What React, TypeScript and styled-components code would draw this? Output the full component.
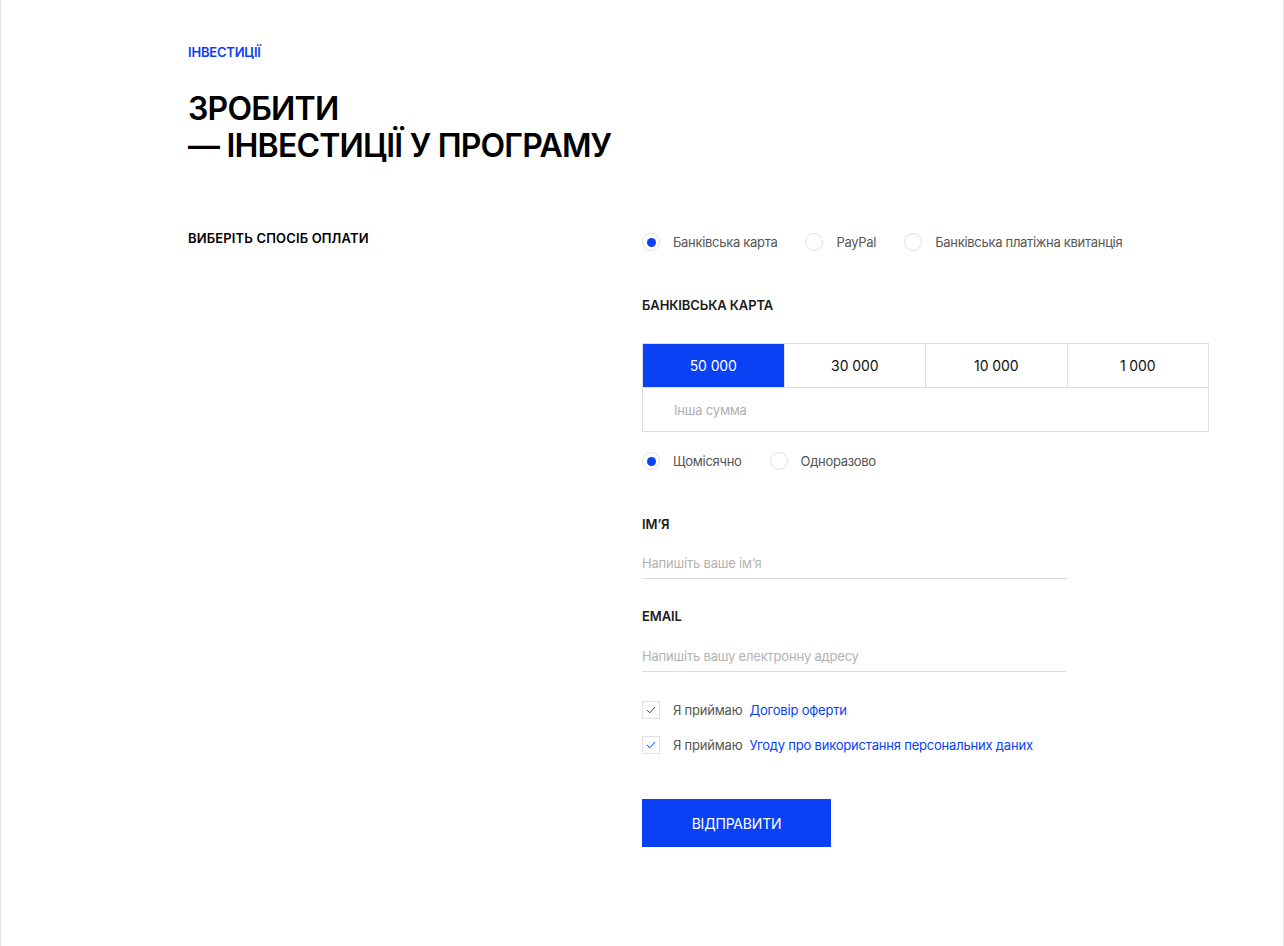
import React, { useState } from "react";
import styled, { createGlobalStyle } from "styled-components";

const BLUE = "#0a41f5";

const GlobalStyle = createGlobalStyle`
  body {
    margin: 0;
    background: #fff;
    font-family: Inter, "Noto Sans", "Liberation Sans", sans-serif;
    color: #111;
  }
  * { box-sizing: border-box; }
`;

const Page = styled.div`
  width: 1284px;
  min-height: 946px;
  border-left: 1px solid #e6e6e6;
  border-right: 1px solid #e6e6e6;
  padding: 44px 0 0 187px;
`;

const Eyebrow = styled.div`
  font-size: 13px;
  line-height: 16px;
  font-weight: 600;
  color: ${BLUE};
  letter-spacing: -0.2px;
`;

const Title = styled.h1`
  margin: 30px 0 0;
  font-size: 32px;
  line-height: 37px;
  font-weight: 600;
  letter-spacing: -0.8px;
  color: #000;
`;

const Layout = styled.div`
  display: grid;
  grid-template-columns: 454px 567px;
  margin-top: 66px;
  align-items: start;
`;

const SideLabel = styled.div`
  font-size: 13px;
  line-height: 16px;
  font-weight: 600;
  color: #000;
  letter-spacing: 0.15px;
`;

const Form = styled.div`
  display: flex;
  flex-direction: column;
  padding-top: 2px;
`;

const RadioRow = styled.div<{ $mt?: number }>`
  display: flex;
  align-items: center;
  height: 20px;
  margin-top: ${(p) => p.$mt ?? 0}px;
`;

const RadioOption = styled.label`
  display: flex;
  align-items: center;
  gap: 13px;
  margin-right: 28px;
  font-size: 13px;
  color: #555;
  cursor: pointer;
  letter-spacing: -0.3px;
`;

const RadioDot = styled.span<{ $on: boolean }>`
  width: 18px;
  height: 18px;
  border-radius: 50%;
  border: 1px solid #e0e0e0;
  display: flex;
  align-items: center;
  justify-content: center;
  flex-shrink: 0;
  &::after {
    content: "";
    width: 9px;
    height: 9px;
    border-radius: 50%;
    background: ${(p) => (p.$on ? BLUE : "transparent")};
  }
`;

const SectionLabel = styled.div<{ $mt: number }>`
  margin-top: ${(p) => p.$mt}px;
  font-size: 13px;
  line-height: 16px;
  font-weight: 600;
  color: #1a1a1a;
  letter-spacing: -0.1px;
`;

const AmountGrid = styled.div`
  margin-top: 30px;
  display: grid;
  grid-template-columns: repeat(4, 1fr);
  border-top: 1px solid #dedede;
  border-left: 1px solid #dedede;
`;

const AmountCell = styled.button<{ $active: boolean }>`
  height: 44px;
  border: none;
  border-right: 1px solid #dedede;
  border-bottom: 1px solid #dedede;
  background: ${(p) => (p.$active ? BLUE : "#fff")};
  color: ${(p) => (p.$active ? "#fff" : "#111")};
  font-family: inherit;
  font-size: 14px;
  letter-spacing: -0.1px;
  cursor: pointer;
`;

const OtherSum = styled.input`
  grid-column: 1 / -1;
  height: 44px;
  border: none;
  border-right: 1px solid #dedede;
  border-bottom: 1px solid #dedede;
  padding: 0 0 0 31px;
  font-family: inherit;
  font-size: 13px;
  letter-spacing: -0.2px;
  outline: none;
  &::placeholder {
    color: #b0b0b0;
  }
`;

const TextInput = styled.input<{ $mt: number }>`
  margin-top: ${(p) => p.$mt}px;
  width: 425px;
  height: 31px;
  border: none;
  border-bottom: 1px solid #dcdcdc;
  padding: 0 0 1px;
  font-family: inherit;
  font-size: 13px;
  letter-spacing: -0.2px;
  outline: none;
  &::placeholder {
    color: #b3b3b3;
  }
`;

const CheckRow = styled.label<{ $mt: number }>`
  margin-top: ${(p) => p.$mt}px;
  display: flex;
  align-items: center;
  height: 18px;
  font-size: 13px;
  color: #555;
  letter-spacing: -0.2px;
`;

const CheckBox = styled.span`
  width: 18px;
  height: 18px;
  border: 1px solid #e0e0e0;
  display: flex;
  align-items: center;
  justify-content: center;
  margin-right: 13px;
  flex-shrink: 0;
`;

const Link = styled.a`
  margin-left: 7px;
  color: ${BLUE};
  text-decoration: none;
`;

const Submit = styled.button`
  margin-top: 45px;
  width: 189px;
  height: 48px;
  border: none;
  background: ${BLUE};
  color: #fff;
  font-family: inherit;
  font-size: 14px;
  letter-spacing: -0.2px;
  cursor: pointer;
`;

const Tick = () => (
  <svg width="10" height="8" viewBox="0 0 10 8" fill="none">
    <path d="M1 4l2.8 2.8L9 1" stroke={BLUE} strokeWidth="1" />
  </svg>
);

const methods = ["Банківська карта", "PayPal", "Банківська платіжна квитанція"];
const amounts = ["50 000", "30 000", "10 000", "1 000"];
const periods = ["Щомісячно", "Одноразово"];

export default function App() {
  const [method, setMethod] = useState(0);
  const [amount, setAmount] = useState(0);
  const [period, setPeriod] = useState(0);

  return (
    <>
      <GlobalStyle />
      <Page>
        <Eyebrow>ІНВЕСТИЦІЇ</Eyebrow>
        <Title>
          ЗРОБИТИ
          <br />— ІНВЕСТИЦІЇ У ПРОГРАМУ
        </Title>
        <Layout>
          <SideLabel>ВИБЕРІТЬ СПОСІБ ОПЛАТИ</SideLabel>
          <Form>
            <RadioRow>
              {methods.map((m, i) => (
                <RadioOption key={m} onClick={() => setMethod(i)}>
                  <RadioDot $on={method === i} />
                  {m}
                </RadioOption>
              ))}
            </RadioRow>

            <SectionLabel $mt={45}>БАНКІВСЬКА КАРТА</SectionLabel>

            <AmountGrid>
              {amounts.map((a, i) => (
                <AmountCell key={a} $active={amount === i} onClick={() => setAmount(i)}>
                  {a}
                </AmountCell>
              ))}
              <OtherSum placeholder="Інша сумма" />
            </AmountGrid>

            <RadioRow $mt={19}>
              {periods.map((p, i) => (
                <RadioOption key={p} onClick={() => setPeriod(i)}>
                  <RadioDot $on={period === i} />
                  {p}
                </RadioOption>
              ))}
            </RadioRow>

            <SectionLabel $mt={45}>ІМ’Я</SectionLabel>
            <TextInput $mt={16} placeholder="Напишіть ваше ім’я" />

            <SectionLabel $mt={29}>EMAIL</SectionLabel>
            <TextInput $mt={17} placeholder="Напишіть вашу електронну адресу" />

            <CheckRow $mt={29}>
              <CheckBox>
                <Tick />
              </CheckBox>
              Я приймаю
              <Link href="#">Договір оферти</Link>
            </CheckRow>
            <CheckRow $mt={17}>
              <CheckBox>
                <Tick />
              </CheckBox>
              Я приймаю
              <Link href="#">Угоду про використання персональних даних</Link>
            </CheckRow>

            <Submit>ВІДПРАВИТИ</Submit>
          </Form>
        </Layout>
      </Page>
    </>
  );
}
